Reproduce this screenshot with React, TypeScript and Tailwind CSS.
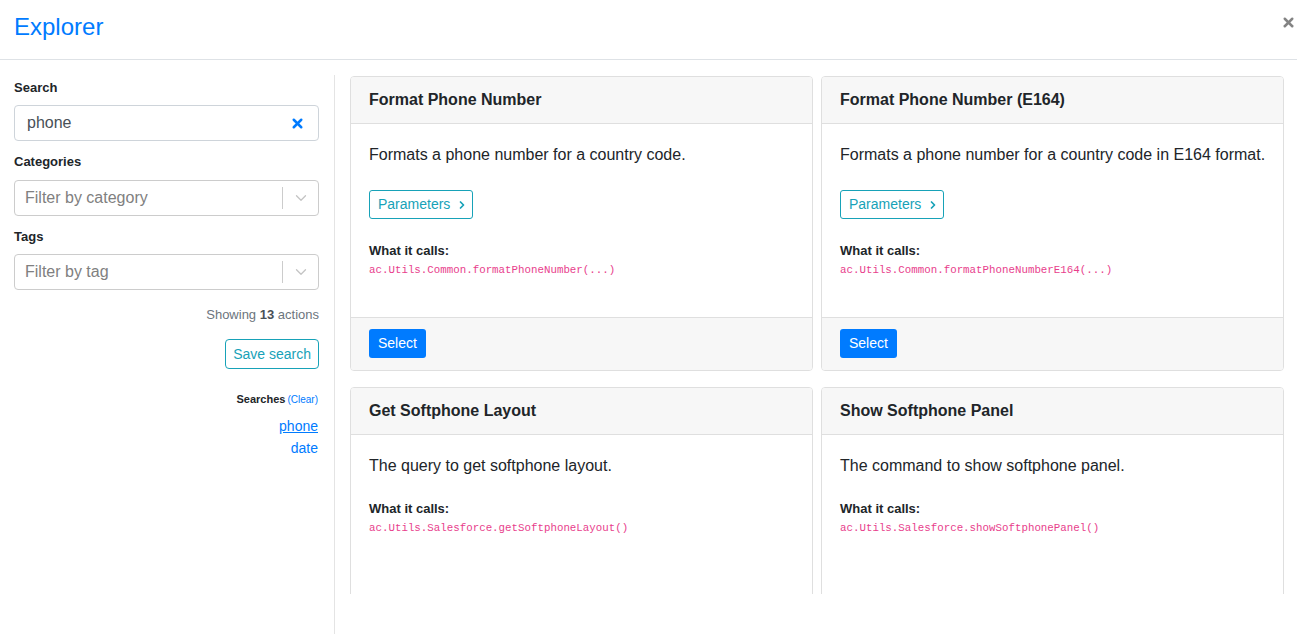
import React from "react";
import { X, ChevronDown, ChevronRight } from "lucide-react";

type Action = {
  title: string;
  description: string;
  call: string;
  params: boolean;
};

const actions: Action[] = [
  {
    title: "Format Phone Number",
    description: "Formats a phone number for a country code.",
    call: "ac.Utils.Common.formatPhoneNumber(...)",
    params: true,
  },
  {
    title: "Format Phone Number (E164)",
    description: "Formats a phone number for a country code in E164 format.",
    call: "ac.Utils.Common.formatPhoneNumberE164(...)",
    params: true,
  },
  {
    title: "Get Softphone Layout",
    description: "The query to get softphone layout.",
    call: "ac.Utils.Salesforce.getSoftphoneLayout()",
    params: false,
  },
  {
    title: "Show Softphone Panel",
    description: "The command to show softphone panel.",
    call: "ac.Utils.Salesforce.showSoftphonePanel()",
    params: false,
  },
];

const SelectBox = ({ placeholder }: { placeholder: string }) => (
  <div className="flex h-[36px] items-center rounded-[4px] border border-[#cccccc] bg-white">
    <span className="flex-1 pl-[10px] text-[16px] text-[#808080]">{placeholder}</span>
    <span className="h-[22px] w-px bg-[#cccccc]" />
    <span className="flex w-[35px] justify-center text-[#c4c4c4]">
      <ChevronDown size={18} strokeWidth={1.75} />
    </span>
  </div>
);

const Card = ({ action }: { action: Action }) => (
  <div className="flex flex-col overflow-hidden rounded-[4px] border border-[#dfdfdf] bg-white">
    <div className="flex h-[47px] items-center border-b border-[#dfdfdf] bg-[#f7f7f7] px-[18px]">
      <h5 className="text-[16px] font-bold text-[#212529]">{action.title}</h5>
    </div>
    <div className={`flex-1 px-[18px] pt-[19px] ${action.params ? "pb-[38px]" : "pb-[80px]"}`}>
      <p className="whitespace-nowrap text-[16px] leading-[24px] text-[#212529]">{action.description}</p>
      {action.params && (
        <button className="mt-[23px] flex h-[29px] items-center gap-[6px] rounded-[3px] border border-[#17a2b8] pl-[8px] pr-[4px] text-[14px] text-[#17a2b8]">
          Parameters
          <ChevronRight size={12} strokeWidth={3.5} />
        </button>
      )}
      <div
        className={`${action.params ? "mt-[22px]" : "mt-[21px]"} text-[13px] font-bold leading-[20px] text-[#212529]`}
      >
        What it calls:
      </div>
      <code className="block font-['Liberation_Mono',monospace] text-[10.8px] leading-[18px] text-[#e83e8c]">
        {action.call}
      </code>
    </div>
    {action.params && (
      <div className="border-t border-[#dfdfdf] bg-[#f7f7f7] px-[18px] pb-[12px] pt-[11px]">
        <button className="h-[29px] rounded-[3px] bg-[#007bff] px-[9px] text-[14px] text-white">Select</button>
      </div>
    )}
  </div>
);

export default function App() {
  return (
    <div className="flex h-[634px] w-full flex-col overflow-hidden bg-white font-['Liberation_Sans',Arial,sans-serif] text-[#212529]">
      <div className="flex h-[60px] shrink-0 items-start justify-between border-b border-[#dee2e6] pl-[14px] pr-[1px]">
        <h1 className="mt-[12px] text-[24px] font-normal leading-[30px] text-[#007bff]">Explorer</h1>
        <button className="mt-[15px] text-[#848484]">
          <X size={15} strokeWidth={4} />
        </button>
      </div>

      <div className="flex flex-1 overflow-hidden pt-[15px]">
        <aside className="w-[335px] shrink-0 border-r border-[#e4e4e4] pl-[14px] pr-[15px]">
          <label className="block pt-[4px] text-[13px] font-bold leading-[18px]">Search</label>
          <div className="mt-[8px] flex h-[36px] items-center rounded-[4px] border border-[#ced4da] pl-[12px] pr-[13px]">
            <span className="flex-1 text-[16px] text-[#495057]">phone</span>
            <X size={15} strokeWidth={4} className="text-[#007bff]" />
          </div>

          <label className="mt-[12px] block text-[13px] font-bold leading-[18px]">Categories</label>
          <div className="mt-[9px]">
            <SelectBox placeholder="Filter by category" />
          </div>

          <label className="mt-[12px] block text-[13px] font-bold leading-[18px]">Tags</label>
          <div className="mt-[8px]">
            <SelectBox placeholder="Filter by tag" />
          </div>

          <div className="mt-[16px] text-right text-[13px] leading-[18px] text-[#6c757d]">
            Showing <b className="text-[#495057]">13</b> actions
          </div>

          <div className="mt-[15px] flex justify-end">
            <button className="h-[30px] rounded-[4px] border border-[#17a2b8] px-[7px] text-[14px] text-[#17a2b8]">
              Save search
            </button>
          </div>

          <div className="mt-[22px] pr-[1px] text-right leading-[14px]">
            <span className="text-[11px] font-bold">Searches</span>
            <span className="ml-[2px] text-[10px] text-[#007bff]">(Clear)</span>
          </div>
          <div className="mt-[8px] flex flex-col items-end pr-[1px] text-[14px] leading-[22px] text-[#007bff]">
            <a className="underline">phone</a>
            <a>date</a>
          </div>
        </aside>

        <main className="flex-1 pl-[15px] pr-[13px] pt-[1px]">
          <div className="h-[518px] overflow-hidden">
            <div className="grid grid-cols-2 gap-x-[8px] gap-y-[16px]">
              {actions.map((a) => (
                <Card key={a.title} action={a} />
              ))}
            </div>
          </div>
        </main>
      </div>
    </div>
  );
}
